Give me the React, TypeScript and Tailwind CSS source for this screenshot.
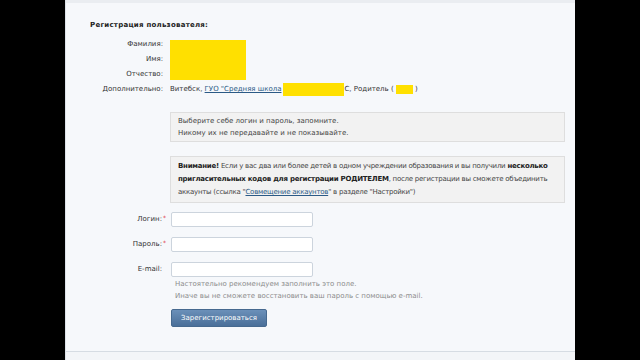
export default function App() {
  return (
    <div className="w-[640px] h-[360px] bg-black flex justify-center overflow-hidden font-['DejaVu_Sans',sans-serif] text-[7px]">
      <div className="w-[510px] h-full bg-[#f6f8fb] border-l border-[#dde2e8] flex flex-col">
        <div className="h-[3px] bg-[#eaedf1] shrink-0" />
        <div className="ml-[24px] mt-[16px] leading-[12px] font-bold text-[#222] tracking-[0.25px]">Регистрация пользователя:</div>
        <div className="mt-[6px] grid grid-cols-[97px_1fr] gap-x-[7px] auto-rows-[15px] leading-[15px] text-[#333]">
          <div className="text-right">Фамилия:</div>
          <div className="row-span-3 self-center w-[76px] h-[40px] bg-[#ffe000]" />
          <div className="text-right">Имя:</div>
          <div className="text-right">Отчество:</div>
          <div className="text-right">Дополнительно:</div>
          <div className="whitespace-nowrap flex items-center">
            <span>Витебск,&nbsp;</span>
            <span className="text-[#2b5a86] underline">ГУО "Средняя школа</span>
            <span className="inline-block w-[61px] h-[13px] bg-[#ffe000] ml-[2px]" />
            <span>С, Родитель (&nbsp;</span>
            <span className="inline-block w-[17px] h-[9px] bg-[#ffe000]" />
            <span>&nbsp;)</span>
          </div>
        </div>
        <div className="ml-[104px] w-[395px] mt-[15px] bg-[#f2f2f2] border border-[#dedede] px-[7px] py-[2px] leading-[12px] text-[#444]">
          <div>Выберите себе логин и пароль, запомните.</div>
          <div>Никому их не передавайте и не показывайте.</div>
        </div>
        <div className="ml-[104px] w-[395px] mt-[14px] bg-[#f2f2f2] border border-[#dedede] px-[7px] py-[3px] leading-[13px] text-[#444] whitespace-nowrap tracking-[-0.25px]">
          <div><b className="text-[#222]">Внимание!</b> Если у вас два или более детей в одном учреждении образования и вы получили <b className="text-[#222]">несколько</b></div>
          <div><b className="text-[#222]">пригласительных кодов для регистрации РОДИТЕЛЕМ</b>, после регистрации вы сможете объединить</div>
          <div>аккаунты (ссылка "<span className="text-[#2b5a86] underline">Совмещение аккаунтов</span>" в разделе "Настройки")</div>
        </div>
        <div className="mt-[9px] flex flex-col gap-[10px] text-[#333]">
          {["Логин:", "Пароль:", "E-mail:"].map((l, i) => (
            <div key={l} className="grid grid-cols-[101px_auto] gap-x-[4px] items-center">
              <div className="flex justify-end items-center">
                <span>{l}</span>
                <span className="w-[5px] text-[#d33] text-[6px] self-start leading-[8px] pl-[1px]">{i < 2 ? "*" : ""}</span>
              </div>
              <div className="w-[142px] h-[15px] bg-white border border-[#ccd4dd] rounded-[2px]" />
            </div>
          ))}
        </div>
        <div className="ml-[109px] mt-[1px] leading-[12px] text-[#8c8c8c]">
          <div>Настоятельно рекомендуем заполнить это поле.</div>
          <div>Иначе вы не сможете восстановить ваш пароль с помощью e-mail.</div>
        </div>
        <div className="ml-[105px] mt-[7px] w-[96px] h-[18px] rounded-[2px] bg-gradient-to-b from-[#6b90b9] to-[#4a6f99] border border-[#46698f] flex items-center justify-center text-white">
          Зарегистрироваться
        </div>
        <div className="mt-auto h-[9px] border-t border-[#d6dce3] bg-[#f3f5f8] shrink-0" />
      </div>
    </div>
  );
}
